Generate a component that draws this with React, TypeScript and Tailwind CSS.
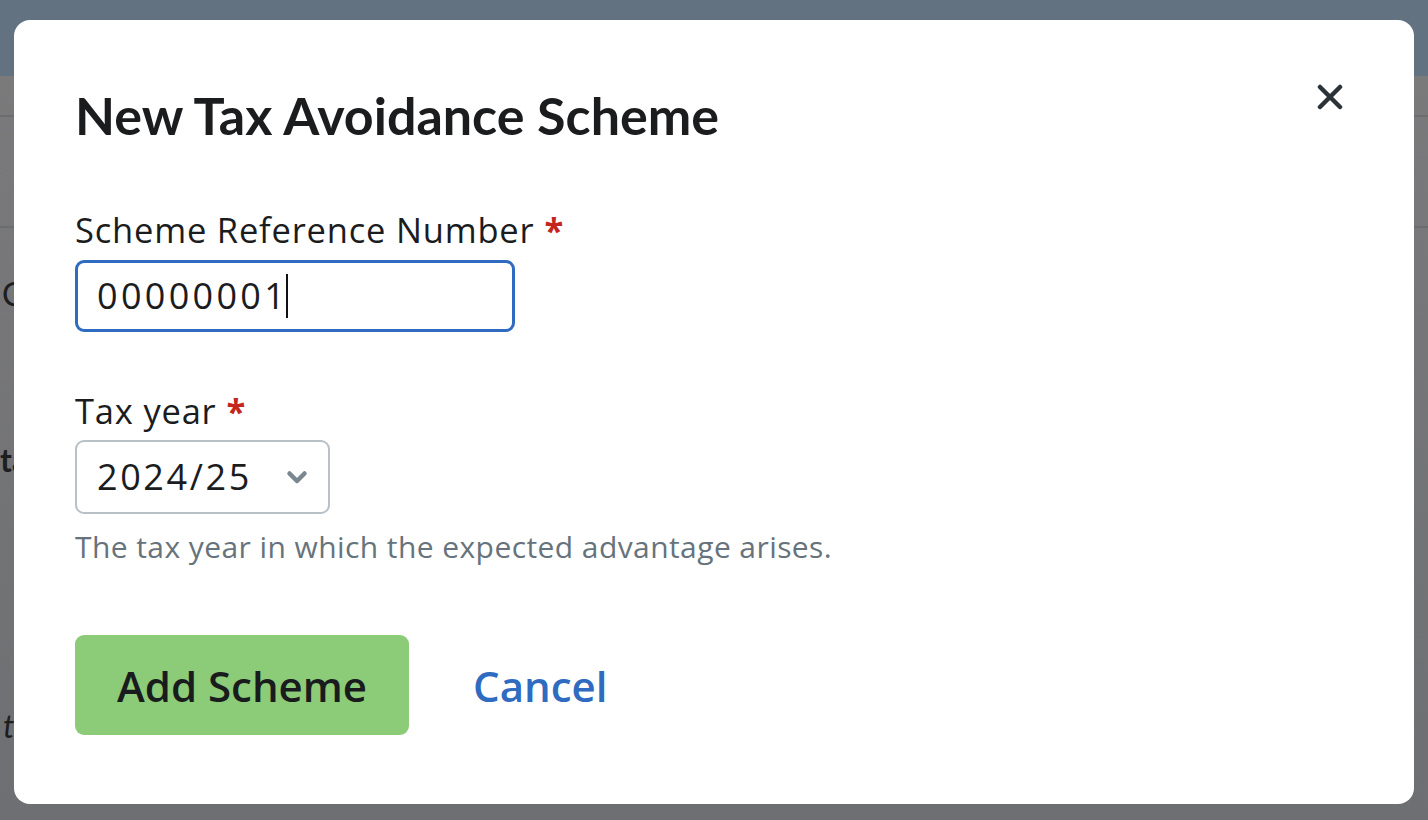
import { useState } from "react";

function CloseIcon() {
  return (
    <svg width="26" height="26" viewBox="0 0 26 26" fill="none">
      <path
        d="M3 3L23 23M23 3L3 23"
        stroke="#2b3338"
        strokeWidth="4.5"
        strokeLinecap="round"
      />
    </svg>
  );
}

function ChevronDown() {
  return (
    <svg width="22" height="15" viewBox="0 0 22 15" fill="none">
      <path
        d="M3.5 3.5L11 11L18.5 3.5"
        stroke="#7b8790"
        strokeWidth="4.5"
        strokeLinecap="round"
        strokeLinejoin="round"
      />
    </svg>
  );
}

function Required() {
  return <span className="ml-[10px] font-bold text-[#c4261d]">*</span>;
}

// page behind the overlay, only a sliver shows at the left edge
function Backdrop() {
  return (
    <div className="flex h-full flex-col bg-gradient-to-b from-[#7b7b7c] to-[#6e6f72]">
      <div className="h-[76px] shrink-0 bg-[#637280]" />
      <div className="h-[41px] shrink-0 border-b-2 border-[#6c6d6f]" />
      <div className="h-[111px] shrink-0 border-b-2 border-[#6c6d6f]" />
      <div className="flex flex-col font-['Lato',sans-serif] text-[#1d1e20]">
        <p className="ml-[2px] mt-[46px] text-[32px] leading-[40px]">C</p>
        <p className="mt-[126px] text-[32px] font-bold leading-[40px]">ta</p>
        <p className="ml-[3px] mt-[226px] text-[32px] italic leading-[40px]">
          t
        </p>
      </div>
    </div>
  );
}

export default function App() {
  const [year] = useState("2024/25");

  return (
    <div className="relative h-[820px] w-full overflow-hidden font-['Open_Sans',sans-serif]">
      <Backdrop />

      <div className="absolute left-[14px] top-[20px] flex h-[784px] w-[1400px] flex-col rounded-[16px] bg-white px-[61px] pt-[64px] text-[#1b1c1e]">
        <button className="absolute right-[71px] top-[64px]" aria-label="Close">
          <CloseIcon />
        </button>

        <h1 className="font-['Lato',sans-serif] text-[52px] font-bold leading-[1.2]">
          New Tax Avoidance Scheme
        </h1>

        <label className="mt-[63px] text-[34.5px] leading-[1.2] tracking-[0.8px]">
          Scheme Reference Number
          <Required />
        </label>
        <div className="mt-[9px] flex h-[72px] w-[440px] items-center rounded-[9px] border-[3px] border-[#2f6bc0] pl-[19px] text-[36px]">
          <span className="tracking-[3.3px]">00000001</span>
          <span className="ml-[-2px] h-[44px] w-[2px] bg-[#111]" />
        </div>

        <label className="mt-[58px] text-[34.5px] leading-[1.2] tracking-[0.8px]">
          Tax year
          <Required />
        </label>
        <div className="mt-[9px] flex h-[74px] w-[255px] items-center justify-between rounded-[9px] border-2 border-[#b9c0c6] pl-[20px] pr-[20px] text-[36px]">
          <span className="tracking-[2.6px]">{year}</span>
          <ChevronDown />
        </div>
        <p className="mt-[15px] text-[30px] leading-[1.2] tracking-[0.42px] text-[#67737c]">
          The tax year in which the expected advantage arises.
        </p>

        <div className="mt-[70px] flex items-center gap-[64px]">
          <button className="flex h-[100px] items-center rounded-[9px] bg-[#8ccb78] px-[42px] text-[42px] font-semibold text-[#1a1b1c]">
            Add Scheme
          </button>
          <button className="text-[42px] font-semibold text-[#2f6bc0]">
            Cancel
          </button>
        </div>
      </div>
    </div>
  );
}
